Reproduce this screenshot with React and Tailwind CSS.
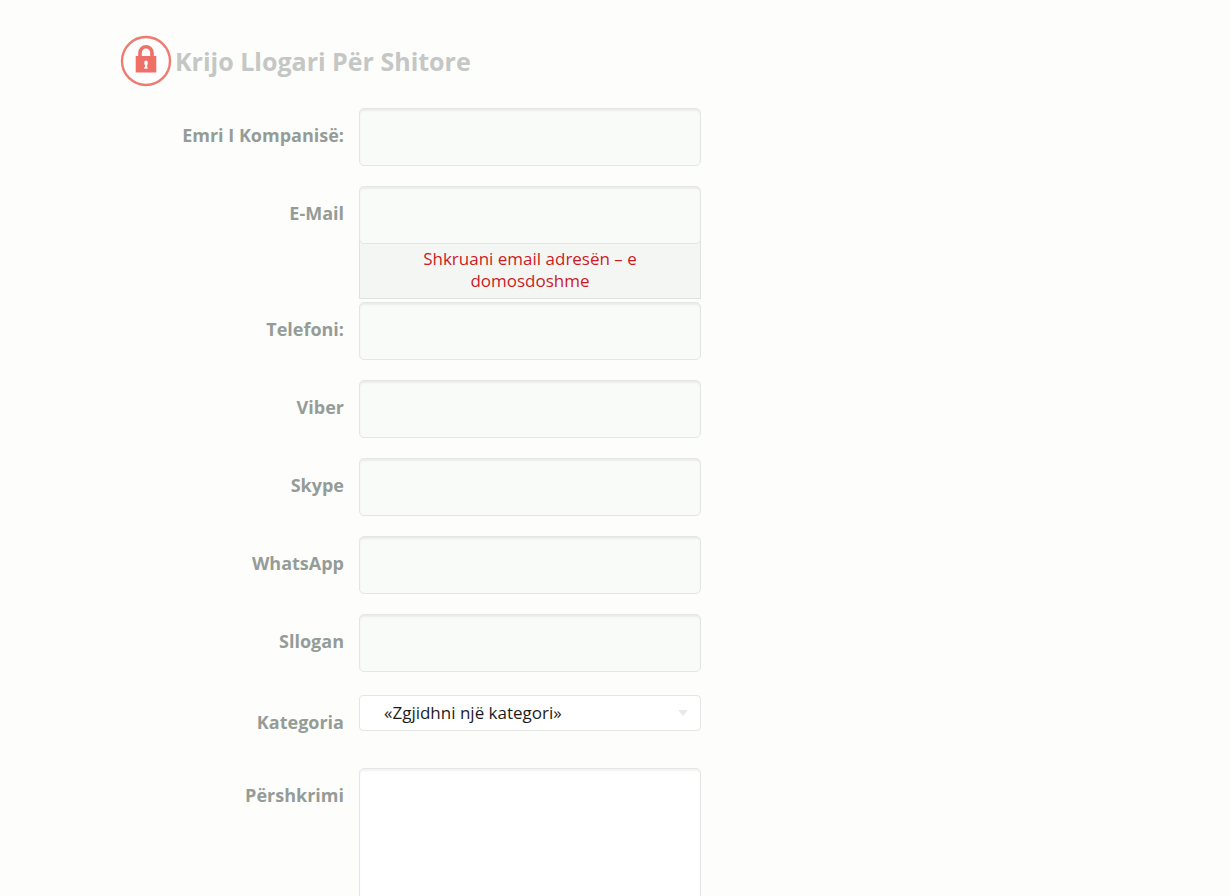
import React from 'react';

const inputClass =
    "block w-full h-[58px] px-6 text-[17px] text-black bg-[#f9fbf9] border border-[#e4e6e4] rounded-[5px] shadow-[inset_0_2px_2px_rgba(0,0,0,0.06)] outline-none focus:border-[#c3c7c3]";

const LockIcon = () => (
    <svg className="w-[52px] h-[52px] shrink-0" viewBox="0 0 52 52" fill="none" aria-hidden="true">
        <circle cx="26" cy="26" r="24" fill="#fffefe" stroke="#ee7b70" strokeWidth="2.4" />
        <path d="M20 22v-4.200a6 6 0 0 1 12 0v4.200" stroke="#ee7067" strokeWidth="3.600" />
        <rect x="15.700" y="21" width="20.600" height="16.500" rx="0.600" fill="#ee7067" />
        <path d="M24.300 27.200a1.700 1.700 0 0 1 3.400 0v2l-.7 1 .7 3.600h-3.400V32h.8v-2l-.8-.8z" fill="#fff" />
    </svg>
);

const Row = ({ id, label, children }) => (
    <div className="flex items-start gap-[15px]">
        <label htmlFor={id} className="w-56 shrink-0 pt-[15px] text-right text-[18px] leading-6 font-bold text-[#959c97]">
            {label}
        </label>
        <div className="w-full max-w-[342px]">{children}</div>
    </div>
);

const TextRow = ({ id, label, type = "text" }) => (
    <Row id={id} label={label}>
        <input id={id} name={id} type={type} className={inputClass} />
    </Row>
);

const App = () => {
    return (
        <div className="min-h-screen bg-[#fdfefc] font-['Open_Sans',sans-serif]">
            <div className="max-w-[990px] mx-auto pt-[35px] pb-10">
                <h1 className="flex items-center gap-[3px] mb-[21px] text-[25px] leading-9 font-bold text-[#c4c7c4]">
                    <LockIcon />
                    Krijo Llogari Për Shitore
                </h1>

                <form>
                    <div className="flex flex-col gap-5">
                        <TextRow id="company" label="Emri I Kompanisë:" />

                        <div className="-mb-[17px]">
                            <Row id="email" label="E-Mail">
                                <input
                                    id="email"
                                    name="email"
                                    type="email"
                                    aria-describedby="email-error"
                                    className={`${inputClass} relative`}
                                />
                                <p
                                    id="email-error"
                                    className="-mt-[5px] h-[60px] px-10 pt-2 text-center text-[17px] leading-[22px] text-[#cc1b24] bg-[#f4f6f4] border border-[#e0e2e0]"
                                >
                                    Shkruani email adresën – e domosdoshme
                                </p>
                            </Row>
                        </div>

                        <TextRow id="phone" label="Telefoni:" type="tel" />
                        <TextRow id="viber" label="Viber" />
                        <TextRow id="skype" label="Skype" />
                        <TextRow id="whatsapp" label="WhatsApp" />
                        <TextRow id="slogan" label="Sllogan" />
                    </div>

                    <div className="mt-[23px]">
                        <Row id="category" label="Kategoria">
                            <div className="relative">
                                <select
                                    id="category"
                                    name="category"
                                    className="block w-full h-9 pl-6 pr-10 appearance-none text-[17px] text-[#1c1c1c] bg-white border border-[#e4e6e4] rounded-[4px] outline-none"
                                >
                                    <option>«Zgjidhni një kategori»</option>
                                </select>
                                <svg className="absolute right-[13px] top-[15px] w-[10px] h-[6px] pointer-events-none" viewBox="0 0 10 6" aria-hidden="true">
                                    <path d="M0 0h10L5 6z" fill="#e8eae8" />
                                </svg>
                            </div>
                        </Row>
                    </div>

                    <div className="mt-[34px]">
                        <Row id="description" label="Përshkrimi">
                            <textarea
                                id="description"
                                name="description"
                                className="block w-full h-[180px] px-6 py-3 text-[17px] resize-none bg-white border border-[#e4e6e4] rounded-[5px] shadow-[inset_0_2px_2px_rgba(0,0,0,0.05)] outline-none"
                            />
                        </Row>
                    </div>
                </form>
            </div>
        </div>
    );
};

export default App;
